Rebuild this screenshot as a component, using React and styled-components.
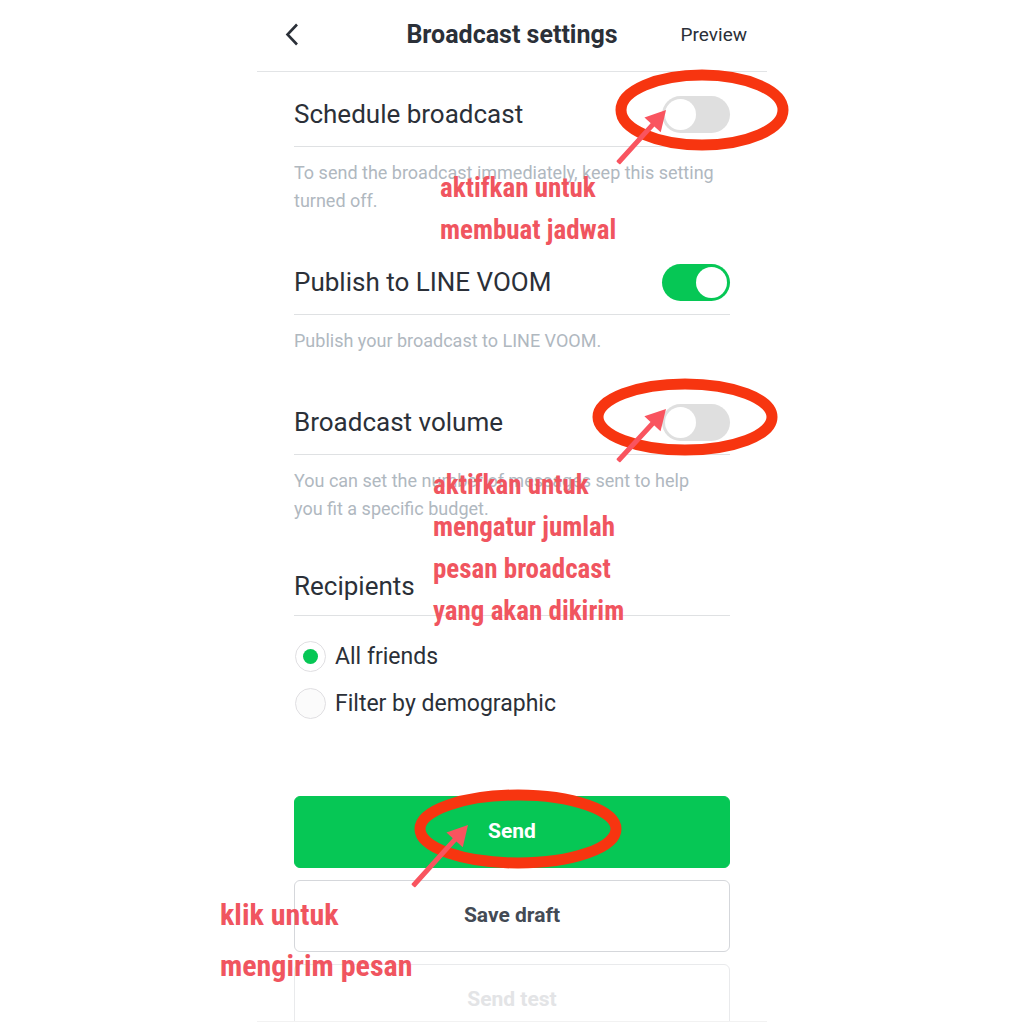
import { useState } from "react";
import styled, { createGlobalStyle } from "styled-components";

const GlobalStyle = createGlobalStyle`
    * {
        box-sizing: border-box;
    }

    body {
        margin: 0;
        background-color: #fff;
        color: #2b3038;
        font-family: Roboto, "Liberation Sans", sans-serif;
        overflow: hidden;
    }

    button {
        font-family: inherit;
        cursor: pointer;
    }
`;

function SwitchSetting({ id, title, text, defaultOn }) {
    const [on, setOn] = useState(Boolean(defaultOn));

    return (
        <Section>
            <SectionHead>
                <label htmlFor={id}>{title}</label>
                <Switch
                    id={id}
                    type="checkbox"
                    role="switch"
                    checked={on}
                    onChange={(e) => setOn(e.target.checked)}
                />
            </SectionHead>
            <Help>{text}</Help>
        </Section>
    );
}

function Arrow({ x1, y1, x2, y2 }) {
    const angle = (Math.atan2(y2 - y1, x2 - x1) * 180) / Math.PI;
    const length = Math.hypot(x2 - x1, y2 - y1);

    return (
        <g transform={`translate(${x1} ${y1}) rotate(${angle})`} fill="#f9545f">
            <rect x="0" y="-2.5" width={length - 14} height="5" rx="1" />
            <path d={`M${length} 0 L${length - 20} -11 V11 Z`} />
        </g>
    );
}

function Marks() {
    return (
        <MarksLayer aria-hidden="true">
            <g fill="none" stroke="#f73510" strokeWidth="11">
                <ellipse cx="445" cy="110" rx="81" ry="35" />
                <ellipse cx="428" cy="417" rx="87" ry="33" />
                <ellipse cx="261" cy="829" rx="98" ry="34" />
            </g>
            <Arrow x1={361} y1={163} x2={409} y2={110} />
            <Arrow x1={361} y1={461} x2={409} y2={409} />
            <Arrow x1={156} y1={886} x2={211} y2={825} />
        </MarksLayer>
    );
}

function App() {
    const [recipients, setRecipients] = useState("all");

    return (
        <Stage>
            <GlobalStyle />
            <Screen>
                <Header>
                    <BackButton type="button" aria-label="Back">
                        <svg width="14" height="24" viewBox="0 0 14 24" fill="none">
                            <path d="M12 1.5 L2.5 11.5 L12 21.5" stroke="#2b3038" strokeWidth="2.6" />
                        </svg>
                    </BackButton>
                    <h1>Broadcast settings</h1>
                    <PreviewButton type="button">Preview</PreviewButton>
                </Header>
                <Content>
                    <SwitchSetting
                        id="schedule"
                        title="Schedule broadcast"
                        text="To send the broadcast immediately, keep this setting turned off."
                    />
                    <SwitchSetting
                        id="voom"
                        title="Publish to LINE VOOM"
                        text="Publish your broadcast to LINE VOOM."
                        defaultOn
                    />
                    <SwitchSetting
                        id="volume"
                        title="Broadcast volume"
                        text="You can set the number of messages sent to help you fit a specific budget."
                    />
                    <SectionHead as="h2" id="recipients" $compact>
                        Recipients
                    </SectionHead>
                    <Options role="radiogroup" aria-labelledby="recipients">
                        <Option>
                            <Radio
                                type="radio"
                                name="recipients"
                                checked={recipients === "all"}
                                onChange={() => setRecipients("all")}
                            />
                            All friends
                        </Option>
                        <Option>
                            <Radio
                                type="radio"
                                name="recipients"
                                checked={recipients === "filter"}
                                onChange={() => setRecipients("filter")}
                            />
                            Filter by demographic
                        </Option>
                    </Options>
                    <Actions>
                        <ActionButton type="button" $primary>Send</ActionButton>
                        <ActionButton type="button">Save draft</ActionButton>
                        <ActionButton type="button" disabled>Send test</ActionButton>
                    </Actions>
                </Content>
            </Screen>
            <Marks />
            <Note $left={183} $top={167}>
                aktifkan untuk<br />
                membuat jadwal
            </Note>
            <Note $left={176} $top={464}>
                aktifkan untuk<br />
                mengatur jumlah<br />
                pesan broadcast<br />
                yang akan dikirim
            </Note>
            <Note $left={-37} $top={889} $large>
                klik untuk<br />
                mengirim pesan
            </Note>
        </Stage>
    );
}

export default App;

const Stage = styled.div`
    position: relative;
    width: 100%;
    max-width: 510px;
    margin: 0 auto;
`;

const Screen = styled.main`
    max-height: calc(100vh - 2px);
    overflow: hidden;
    border-bottom: 1px solid #f2f2f2;
`;

const Header = styled.header`
    display: grid;
    grid-template-columns: 1fr auto 1fr;
    align-items: center;
    height: 72px;
    padding: 0 20px 2px;
    border-bottom: 1px solid #e2e4e6;

    h1 {
        margin: 0;
        font-size: 25px;
        line-height: 32px;
        font-weight: 700;
    }
`;

const BackButton = styled.button`
    display: flex;
    justify-self: start;
    padding: 0 8px;
    border: 0;
    background: none;
`;

const PreviewButton = styled.button`
    justify-self: end;
    padding: 0;
    border: 0;
    background: none;
    color: #2b3038;
    font-size: 19px;
    line-height: 28px;
`;

const Content = styled.div`
    padding: 0 37px;
`;

const Section = styled.section`
    padding-bottom: 25px;
`;

const SectionHead = styled.div`
    display: flex;
    align-items: center;
    justify-content: space-between;
    margin: 0;
    padding: ${(props) => (props.$compact ? "20px 0 10px" : "24px 0 13px")};
    border-bottom: 1px solid #dfe1e3;
    font-size: 26px;
    line-height: 37px;
    font-weight: 400;
`;

const Help = styled.p`
    margin: 0;
    padding: 12px 12px 0 0;
    color: #b0b8bf;
    font-size: 18px;
    line-height: 28px;
`;

const Switch = styled.input`
    appearance: none;
    display: flex;
    width: 68px;
    height: 37px;
    margin: 0;
    padding: 3px;
    border-radius: 20px;
    background-color: #dfdfdf;
    cursor: pointer;

    &::before {
        content: "";
        width: 31px;
        height: 31px;
        border-radius: 50%;
        background-color: #fff;
    }

    &:checked {
        justify-content: flex-end;
        background-color: #06c755;
    }
`;

const Options = styled.div`
    display: flex;
    flex-direction: column;
    gap: 16px;
    padding-top: 25px;
`;

const Option = styled.label`
    display: flex;
    align-items: center;
    gap: 9px;
    font-size: 23px;
    line-height: 31px;
`;

const Radio = styled.input`
    appearance: none;
    display: grid;
    place-items: center;
    width: 31px;
    height: 31px;
    margin: 0 0 0 1px;
    border: 1px solid #e0dfe2;
    border-radius: 50%;
    background-color: #fbfbfb;

    &:checked {
        background-color: #fff;
    }

    &:checked::before {
        content: "";
        width: 15px;
        height: 15px;
        border-radius: 50%;
        background-color: #06c755;
    }
`;

const Actions = styled.div`
    display: flex;
    flex-direction: column;
    gap: 12px;
    padding-top: 77px;
`;

const ActionButton = styled.button`
    height: 72px;
    flex-shrink: 0;
    padding: 0 0 2px;
    border: 1px solid ${(props) => (props.$primary ? "#06c755" : "#d5d7db")};
    border-radius: 6px;
    background-color: ${(props) => (props.$primary ? "#06c755" : "#fff")};
    color: ${(props) => (props.$primary ? "#fff" : "#434a54")};
    font-size: 21px;
    font-weight: 700;

    &:disabled {
        border-color: #e9eaec;
        color: #e3e4e6;
        cursor: default;
    }
`;

const MarksLayer = styled.svg`
    position: absolute;
    inset: 0;
    width: 100%;
    height: 100%;
    overflow: visible;
    pointer-events: none;
`;

const Note = styled.p`
    position: absolute;
    left: ${(props) => props.$left}px;
    top: ${(props) => props.$top}px;
    margin: 0;
    color: #f0555f;
    font-family: "Roboto Condensed", Lato, sans-serif;
    font-size: ${(props) => (props.$large ? 30 : 27)}px;
    line-height: ${(props) => (props.$large ? 51 : 42)}px;
    font-weight: 700;
    white-space: nowrap;
    pointer-events: none;
`;
